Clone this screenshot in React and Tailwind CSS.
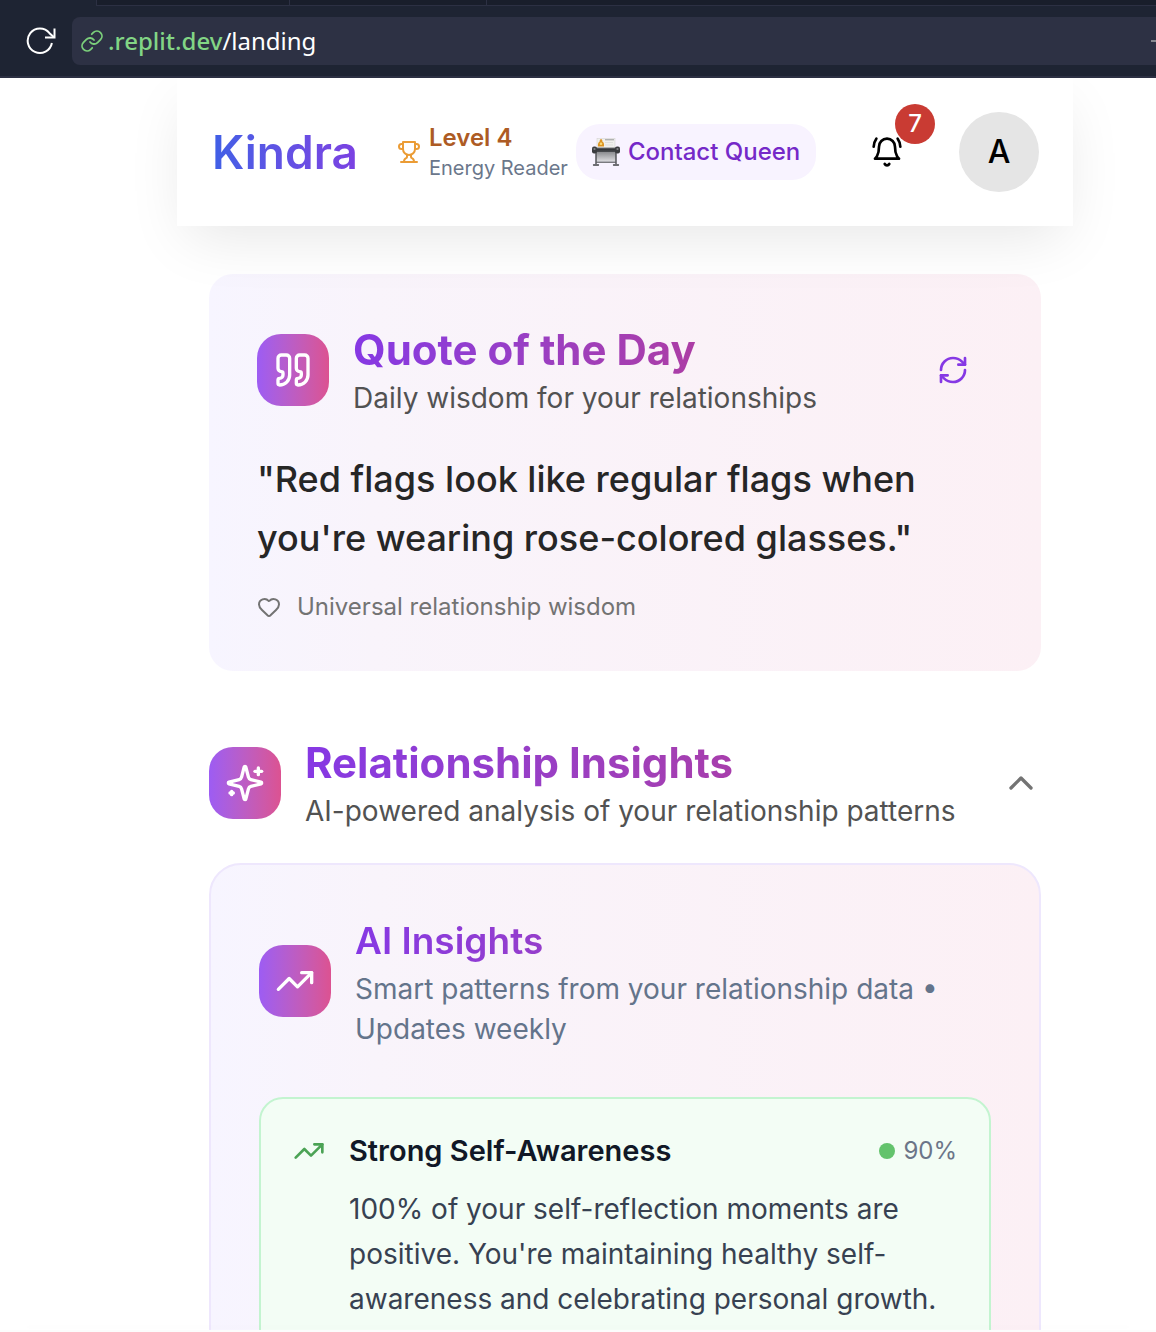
import React from "react";
import { ChevronUp, Heart, RefreshCw, TrendingUp } from "lucide-react";

const stroke = {
  viewBox: "0 0 24 24",
  fill: "none",
  stroke: "currentColor",
  strokeWidth: 2,
  strokeLinecap: "round",
  strokeLinejoin: "round",
  "aria-hidden": true,
};

function BellRingIcon() {
  return (
    <svg {...stroke} className="size-8">
      <path d="M6 8a6 6 0 0 1 12 0c0 7 3 9 3 9H3s3-2 3-9" />
      <path d="M10.3 21a1.94 1.94 0 0 0 3.4 0" />
      <path d="M4 2C2.8 3.7 2 5.7 2 8" />
      <path d="M22 8c0-2.3-.8-4.3-2-6" />
    </svg>
  );
}

function SparklesIcon() {
  return (
    <svg {...stroke} className="size-10">
      <path d="M9.937 15.5A2 2 0 0 0 8.5 14.063l-6.135-1.582a.5.5 0 0 1 0-.962L8.5 9.936A2 2 0 0 0 9.937 8.5l1.582-6.135a.5.5 0 0 1 .963 0L14.063 8.5A2 2 0 0 0 15.5 9.937l6.135 1.581a.5.5 0 0 1 0 .964L15.5 14.063a2 2 0 0 0-1.437 1.437l-1.582 6.135a.5.5 0 0 1-.963 0z" />
      <path d="M20 3v4" />
      <path d="M22 5h-4" />
      <path d="M4 17v2" />
      <path d="M5 18H3" />
    </svg>
  );
}

function QuoteIcon() {
  return (
    <svg {...stroke} className="size-10">
      <path d="M16 3a2 2 0 0 0-2 2v6a2 2 0 0 0 2 2 1 1 0 0 1 1 1v1a2 2 0 0 1-2 2 1 1 0 0 0-1 1v2a1 1 0 0 0 1 1 6 6 0 0 0 6-6V5a2 2 0 0 0-2-2z" />
      <path d="M5 3a2 2 0 0 0-2 2v6a2 2 0 0 0 2 2 1 1 0 0 1 1 1v1a2 2 0 0 1-2 2 1 1 0 0 0-1 1v2a1 1 0 0 0 1 1 6 6 0 0 0 6-6V5a2 2 0 0 0-2-2z" />
    </svg>
  );
}

function TrophyIcon() {
  return (
    <svg {...stroke} className="size-6 shrink-0 text-[#eb9c35]">
      <path d="M6 9H4.5a2.5 2.5 0 0 1 0-5H6" />
      <path d="M18 9h1.5a2.5 2.5 0 0 0 0-5H18" />
      <path d="M4 22h16" />
      <path d="M10 14.66V17c0 .55-.47.98-.97 1.21C7.85 18.75 7 20.24 7 22" />
      <path d="M14 14.66V17c0 .55.47.98.97 1.21C16.15 18.75 17 20.24 17 22" />
      <path d="M18 2H6v7a6 6 0 0 0 12 0V2Z" />
    </svg>
  );
}

function CardFileIcon() {
  return (
    <svg viewBox="0 0 28 28" className="size-7 shrink-0" aria-hidden="true">
      <defs>
        <linearGradient id="roller" x1="0" y1="0" x2="0" y2="1">
          <stop offset="0" stopColor="#77797c" />
          <stop offset="0.4" stopColor="#333539" />
          <stop offset="1" stopColor="#4a4c50" />
        </linearGradient>
        <linearGradient id="tray" x1="0" y1="0" x2="0" y2="1">
          <stop offset="0" stopColor="#8b8c90" />
          <stop offset="1" stopColor="#dcdcdf" />
        </linearGradient>
      </defs>
      <rect x="5" y="0.5" width="18" height="10" fill="#f0f0ee" stroke="#cfcfcc" strokeWidth="0.5" />
      <path d="M13 1.8h9" stroke="#8c8d8e" strokeWidth="0.9" />
      <path d="M13 4.500h8M13 7h8" stroke="#dfdfdd" strokeWidth="1" />
      <path d="M9 1c1.6.6 1.400 2 1.300 2.600C12 4.400 12.300 6.500 12 8.600H6C5.700 6.500 6.200 4.400 7.700 3.600 7.500 2.800 7.800 1.500 9 1z" fill="#dc9422" />
      <circle cx="9" cy="5.800" r="1.300" fill="#f8d979" />
      <path d="M4 14h20v9.500H4z" fill="url(#tray)" />
      <path d="M4 14v12M24 14v12" stroke="#4a4c50" strokeWidth="1.400" />
      <path d="M1.500 27h5M21.500 27h5" stroke="#3f4144" strokeWidth="1.300" strokeLinecap="round" />
      <path d="M4 24.200h20" stroke="#5a5c60" strokeWidth="1.200" />
      <rect x="3" y="9.500" width="22" height="4.500" fill="url(#roller)" />
      <rect x="0" y="8.500" width="5" height="7" rx="2" fill="#3a3c3f" />
      <rect x="23" y="8.500" width="5" height="7" rx="2" fill="#3a3c3f" />
      <circle cx="2.500" cy="11" r="1.100" fill="#85878a" />
      <circle cx="25.500" cy="11" r="1.100" fill="#85878a" />
    </svg>
  );
}

function IconTile({ children }) {
  return (
    <div className="flex size-[72px] shrink-0 items-center justify-center rounded-3xl bg-linear-to-r from-[#9d5cf3] to-[#dc5291] text-white">
      {children}
    </div>
  );
}

function SectionTitle({ children }) {
  return (
    <h2 className="bg-linear-to-r from-[#8638e4] to-[#ba378e] bg-clip-text text-[42px] leading-14 font-bold text-transparent">
      {children}
    </h2>
  );
}

function BrowserBar() {
  return (
    <div className="shrink-0 border-b-2 border-[#2c3043] bg-[#1e2433]">
      <div className="ml-24 flex h-[6px] border-b border-l border-[#2c3043] bg-[#191e2b]">
        <div className="w-[193px] border-r border-[#2c3043]" />
        <div className="w-[197px] border-r border-[#2c3043]" />
      </div>
      <div className="flex items-center pt-[11px] pb-[11px]">
        <button type="button" aria-label="Reload" className="flex w-[72px] items-center justify-end pr-4 text-white">
          <svg viewBox="0 0 30 28" fill="none" stroke="currentColor" strokeWidth="2" className="h-7 w-[30px]" aria-hidden="true">
            <path d="M25.900 16A12.200 12.200 0 1 1 23.500 6.200L28 10.300" />
            <path d="M28.500 1.500v9H19" />
          </svg>
        </button>
        <div className="flex h-12 min-w-0 flex-1 items-center rounded-l-lg bg-[#2d3144] pl-2 font-['Noto_Sans',sans-serif] text-2xl text-white">
          <svg viewBox="0 0 24 24" fill="none" stroke="#7bcf7b" strokeWidth="1.800" strokeLinecap="round" className="mr-1 size-6 shrink-0" aria-hidden="true">
            <path d="M10 13a5 5 0 0 0 7.540.540l3-3a5 5 0 0 0-7.070-7.070l-1.720 1.710" />
            <path d="M14 11a5 5 0 0 0-7.540-.540l-3 3a5 5 0 0 0 7.070 7.070l1.710-1.710" />
          </svg>
          <a href="/landing" className="whitespace-nowrap">
            <span className="font-medium text-[#82d585]">.replit.dev</span>/landing
          </a>
          <span className="ml-auto h-[2px] w-[5px] bg-[#85888f]" />
        </div>
      </div>
    </div>
  );
}

function AppHeader() {
  return (
    <header className="relative z-10 flex h-[148px] items-center bg-white pr-[34px] pl-8 shadow-[0_20px_60px_-10px_rgba(0,0,0,0.1)]">
      <h1 className="bg-linear-to-r from-[#3d60e6] to-[#7c40e2] bg-clip-text px-[3px] text-[46px] font-semibold text-transparent">
        Kindra
      </h1>
      <div className="ml-9 flex items-center gap-2">
        <TrophyIcon />
        <div className="whitespace-nowrap">
          <p className="text-2xl leading-8 font-semibold text-[#ad5b24]">Level 4</p>
          <p className="text-xl leading-7 text-[#6b778b]">Energy Reader</p>
        </div>
      </div>
      <div className="ml-2 flex h-14 items-center gap-2 rounded-3xl bg-[#f8f3ff] px-4 text-2xl font-medium whitespace-nowrap text-[#7529c8]">
        <CardFileIcon />
        Contact Queen
      </div>
      <div className="ml-auto flex items-center gap-8">
        <button type="button" aria-label="Notifications, 7 unread" className="relative flex size-20 items-center justify-center text-black">
          <BellRingIcon />
          <span className="absolute -top-2 -right-2 flex size-10 items-center justify-center rounded-full bg-[#c93b33] text-2xl font-medium text-white">
            7
          </span>
        </button>
        <button type="button" aria-label="Account" className="flex size-20 items-center justify-center rounded-full bg-[#e5e5e5] text-[32px] font-medium text-black">
          A
        </button>
      </div>
    </header>
  );
}

function QuoteCard() {
  return (
    <section className="mt-12 rounded-3xl bg-linear-to-r from-[#f7f5ff] via-[#f9f4fb] via-20% to-[#fcf0f5] p-12">
      <div className="flex items-center gap-6">
        <IconTile>
          <QuoteIcon />
        </IconTile>
        <div>
          <SectionTitle>Quote of the Day</SectionTitle>
          <p className="text-[28px] leading-10 text-[#525252]">Daily wisdom for your relationships</p>
        </div>
        <button type="button" aria-label="New quote" className="ml-auto flex size-20 items-center justify-center text-[#8638e4]">
          <RefreshCw className="size-8" />
        </button>
      </div>
      <blockquote className="mt-8 text-4xl leading-[59px] font-medium text-[#262626]">
        "Red flags look like regular flags when you're wearing rose-colored glasses."
      </blockquote>
      <p className="mt-[23px] flex items-center gap-4 text-2xl leading-8 text-[#737373]">
        <Heart className="size-6" />
        Universal relationship wisdom
      </p>
    </section>
  );
}

function InsightsCard() {
  return (
    <div className="mt-8 rounded-[32px] border-2 border-[#eee7fd] bg-linear-to-r from-[#f7f5ff] via-[#f9f4fb] via-20% to-[#fcf0f5] p-12">
      <div className="flex items-center gap-6">
        <IconTile>
          <TrendingUp className="size-10" />
        </IconTile>
        <div className="flex-1">
          <h3 className="bg-linear-to-r from-[#8638e4] to-[#ba378e] bg-clip-text text-[37px] leading-14 font-semibold text-transparent">
            AI Insights
          </h3>
          <p className="text-[28px] leading-10 text-[#64748b]">
            Smart patterns from your relationship data • Updates weekly
          </p>
        </div>
      </div>
      <article className="mt-12 flex gap-6 rounded-3xl border-2 border-[#c3f4d0] bg-[#f3fdf5] p-8">
        <TrendingUp className="mt-1 size-8 shrink-0 text-[#4ba355]" />
        <div className="flex-1">
          <div className="flex items-center justify-between">
            <h4 className="text-[29px] leading-10 font-semibold text-[#111827]">Strong Self-Awareness</h4>
            <span className="flex items-center gap-2 text-2xl text-[#6b7588]">
              <span className="size-4 rounded-full bg-[#63c36c]" />
              90%
            </span>
          </div>
          <p className="mt-4 text-[28px] leading-[45px] text-[#374151]">
            100% of your self-reflection moments are positive. You're maintaining healthy self-awareness and
            celebrating personal growth.
          </p>
        </div>
      </article>
    </div>
  );
}

export default function App() {
  return (
    <div className="flex h-screen flex-col overflow-hidden bg-white font-[Inter,sans-serif]">
      <BrowserBar />
      <main className="min-h-0 flex-1 overflow-hidden pl-[94px]">
        <div className="mx-auto max-w-4xl">
          <AppHeader />
          <div className="px-8">
            <QuoteCard />
            <section className="mt-16">
              <div className="flex items-center gap-6">
                <IconTile>
                  <SparklesIcon />
                </IconTile>
                <div>
                  <SectionTitle>Relationship Insights</SectionTitle>
                  <p className="text-[28px] leading-10 text-[#525252]">
                    AI-powered analysis of your relationship patterns
                  </p>
                </div>
                <button type="button" aria-label="Collapse insights" className="ml-auto text-[#737373]">
                  <ChevronUp className="size-10" />
                </button>
              </div>
              <InsightsCard />
            </section>
          </div>
        </div>
      </main>
      <footer className="relative z-10 h-[2px] shrink-0 bg-[#fcfcfc] shadow-[0_-4px_24px_rgba(0,0,0,0.06)]" />
    </div>
  );
}
